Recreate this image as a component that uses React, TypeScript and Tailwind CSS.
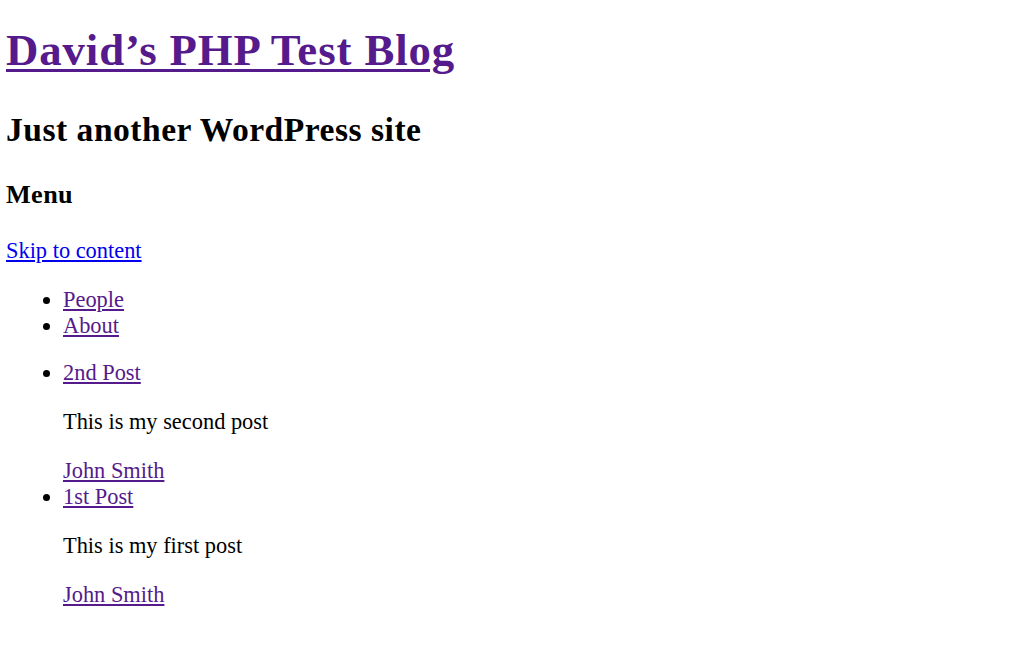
const posts = [
  { title: "2nd Post", excerpt: "This is my second post", author: "John Smith" },
  { title: "1st Post", excerpt: "This is my first post", author: "John Smith" },
];

const pages = ["People", "About"];

export default function App() {
  return (
    <div className="min-h-screen bg-white px-[6px] pt-[25px] font-['Liberation_Serif','Times_New_Roman',serif] text-[22.4px] leading-[26.2px] text-black">
      <header>
        <h1 className="mb-[34px] text-[44.8px] font-bold leading-[51.5px] tracking-[0.9px]">
          <a
            href="#"
            className="text-[#551a8b] underline decoration-[2.5px] underline-offset-[4px]"
          >
            David’s PHP Test Blog
          </a>
        </h1>
        <h2 className="mb-[31px] text-[33.6px] font-bold leading-[38.6px] tracking-[0.5px]">
          Just another WordPress site
        </h2>
        <nav>
          <h3 className="mb-[28.2px] text-[26.2px] font-bold leading-[30.1px] tracking-[0.4px]">
            Menu
          </h3>
          <div>
            <a href="#" className="text-[#0000ee] underline">
              Skip to content
            </a>
          </div>
          <ul className="mt-[22.4px] mb-[21px] list-disc pl-[57px]">
            {pages.map((p) => (
              <li key={p}>
                <a href="#" className="text-[#551a8b] underline">
                  {p}
                </a>
              </li>
            ))}
          </ul>
        </nav>
      </header>

      {/* Posts */}
      <ul className="mt-[21px] mb-[22.6px] list-disc pl-[57px]">
        {posts.map((post) => (
          <li key={post.title}>
            <a href="#" className="text-[#551a8b] underline">
              {post.title}
            </a>
            <p className="my-[22.6px]">{post.excerpt}</p>
            <a href="#" className="text-[#551a8b] underline">
              {post.author}
            </a>
          </li>
        ))}
      </ul>
    </div>
  );
}
